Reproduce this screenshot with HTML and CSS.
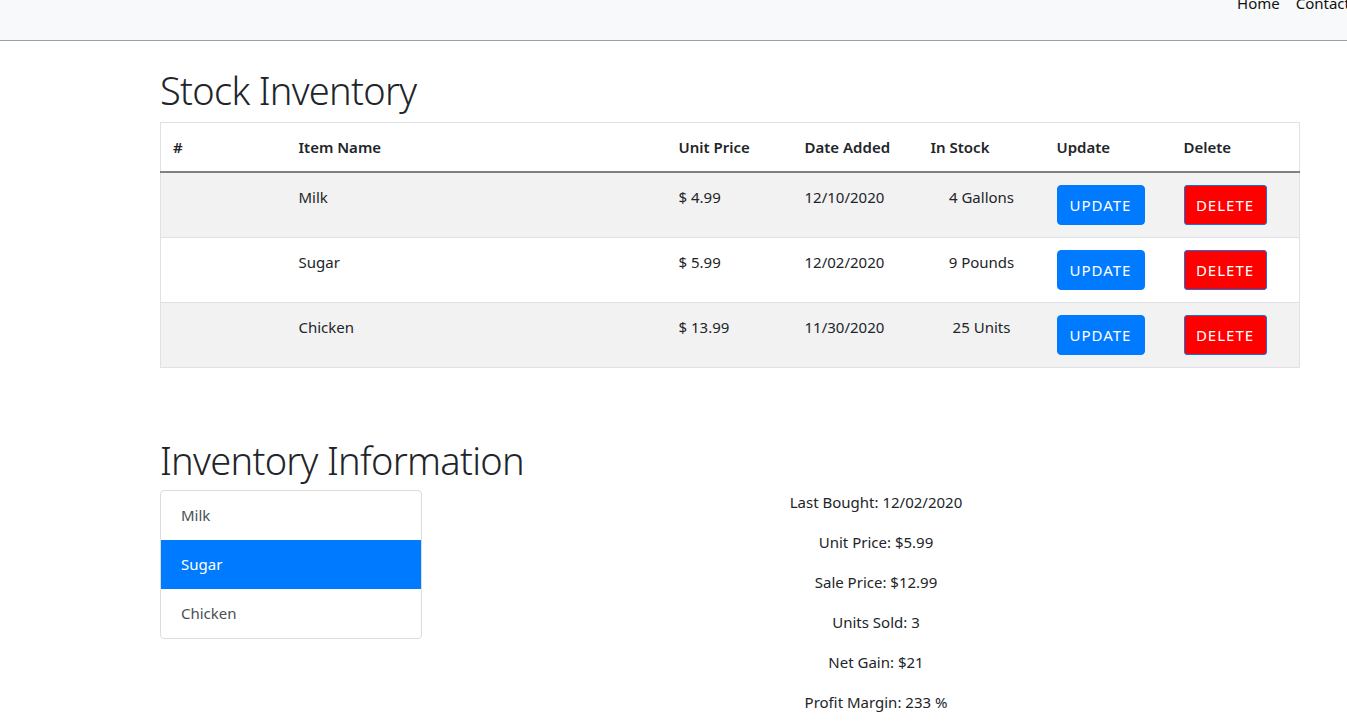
FILE: index.html
```html
<!DOCTYPE html>
<html lang="en">
<head>
<meta charset="utf-8">
<title>Stock Inventory</title>
<link rel="stylesheet" href="styles.css">
</head>
<body>
<header class="navbar">
  <nav class="nav-links">
    <a href="#" class="nav-link">Home</a>
    <a href="#" class="nav-link">Contact</a>
  </nav>
</header>
<main class="container">
  <h1 class="title">Stock Inventory</h1>
  <table class="stock-table">
    <colgroup>
      <col class="c-num"><col class="c-name"><col class="c-std"><col class="c-std"><col class="c-std"><col class="c-upd"><col>
    </colgroup>
    <thead>
      <tr>
        <th>#</th><th>Item Name</th><th>Unit Price</th><th>Date Added</th><th>In Stock</th><th>Update</th><th>Delete</th>
      </tr>
    </thead>
    <tbody>
      <tr class="odd">
        <td></td><td>Milk</td><td>$ 4.99</td><td>12/10/2020</td><td class="stock">4 Gallons</td>
        <td><button class="btn btn-update">UPDATE</button></td>
        <td><button class="btn btn-delete">DELETE</button></td>
      </tr>
      <tr>
        <td></td><td>Sugar</td><td>$ 5.99</td><td>12/02/2020</td><td class="stock">9 Pounds</td>
        <td><button class="btn btn-update">UPDATE</button></td>
        <td><button class="btn btn-delete">DELETE</button></td>
      </tr>
      <tr class="odd">
        <td></td><td>Chicken</td><td>$ 13.99</td><td>11/30/2020</td><td class="stock">25 Units</td>
        <td><button class="btn btn-update">UPDATE</button></td>
        <td><button class="btn btn-delete">DELETE</button></td>
      </tr>
    </tbody>
  </table>

  <h1 class="title title-info">Inventory Information</h1>
  <div class="info-row">
    <ul class="list-group">
      <li class="list-item">Milk</li>
      <li class="list-item active">Sugar</li>
      <li class="list-item">Chicken</li>
    </ul>
    <div class="details">
      <p>Last Bought: 12/02/2020</p>
      <p>Unit Price: $5.99</p>
      <p>Sale Price: $12.99</p>
      <p>Units Sold: 3</p>
      <p>Net Gain: $21</p>
      <p>Profit Margin: 233 %</p>
    </div>
  </div>
</main>
</body>
</html>
```

FILE: styles.css
```css
* { box-sizing: border-box; }

html, body {
  margin: 0;
  padding: 0;
}

body {
  font-family: "Noto Sans", "Open Sans", sans-serif;
  font-size: 15px;
  line-height: 24px;
  color: #212529;
  background: #fff;
  overflow: hidden;
}

.navbar {
  height: 41px;
  background: #f8f9fa;
  border-bottom: 1px solid #a0a0a0;
  display: flex;
  justify-content: flex-end;
  overflow: hidden;
}

.nav-links {
  display: flex;
  gap: 16px;
  margin-top: -9px;
  margin-right: -3px;
}

.nav-link {
  color: #111;
  text-decoration: none;
  font-size: 15px;
}

.container {
  width: 1140px;
  margin-left: 160px;
  padding-top: 25px;
}

.title {
  font-size: 38px;
  font-weight: 300;
  letter-spacing: -0.7px;
  line-height: 48px;
  margin: 0 0 8px;
  color: #212529;
}

.title-info {
  margin-top: 68px;
  margin-bottom: 6px;
}

.stock-table {
  width: 1140px;
  border-collapse: collapse;
  table-layout: fixed;
  border: 1px solid #dee2e6;
}

.c-num { width: 126px; }
.c-name { width: 380px; }
.c-std { width: 126px; }
.c-upd { width: 127px; }

.stock-table th {
  text-align: left;
  font-weight: 600;
  padding: 12px 12px;
  border-bottom: 2px solid #808080;
  line-height: 24px;
  vertical-align: bottom;
}

.stock-table td {
  padding: 12px 12px;
  vertical-align: top;
  border-top: 1px solid #dee2e6;
  line-height: 24px;
  height: 65px;
}

.stock-table tr.odd td {
  background: #f2f2f2;
}

.stock-table td.stock {
  text-align: center;
}

.btn {
  font-family: inherit;
  font-size: 15px;
  line-height: 24px;
  letter-spacing: 1px;
  color: #fff;
  border-radius: 4px;
  padding: 7px 11px;
  cursor: pointer;
  display: inline-block;
}

.btn-update {
  background: #007bff;
  border: 1px solid #007bff;
  width: 88px;
}

.btn-delete {
  background: #ff0000;
  border: 1px solid #1a6fe0;
  width: 83px;
  border-radius: 3px;
}

.info-row {
  display: grid;
  grid-template-columns: 262px 1fr;
  column-gap: 30px;
}

.list-group {
  list-style: none;
  margin: 0;
  padding: 0;
  border: 1px solid #dcdcdc;
  border-radius: 4px;
  overflow: hidden;
  align-self: start;
}

.list-item {
  padding: 12px 20px;
  height: 49px;
  color: #495057;
}

.list-item.active {
  background: #007bff;
  color: #fff;
}

.details {
  text-align: center;
}

.details p {
  margin: 0 0 16px;
}
```
